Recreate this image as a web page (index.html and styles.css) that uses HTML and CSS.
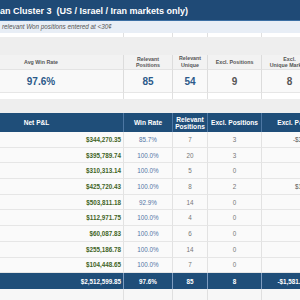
FILE: index.html
```html
<!DOCTYPE html>
<html>
<head>
<meta charset="utf-8">
<link rel="stylesheet" href="styles.css">
</head>
<body>
<div class="title">an Cluster 3&nbsp; (US / Israel / Iran markets only)</div>
<div class="subtitle">relevant Won positions entered at &lt;30¢</div>
<div class="cols stub"><div></div><div></div><div></div><div></div><div></div></div>

<div class="cols stats">
  <div class="lab">Avg Win Rate</div>
  <div class="lab">Relevant<br>Positions</div>
  <div class="lab tall">Relevant<br>Unique<br>Markets</div>
  <div class="lab">Excl. Positions</div>
  <div class="lab">Excl.<br>Unique Markets</div>
  <div class="val blue">97.6%</div>
  <div class="val blue">85</div>
  <div class="val blue">54</div>
  <div class="val grey">9</div>
  <div class="val grey">8</div>
  <div class="gapcell"></div><div class="gapcell"></div><div class="gapcell"></div><div class="gapcell"></div><div class="gapcell"></div>
</div>

<div class="cols2 table">
  <div class="th">Net P&amp;L</div>
  <div class="th">Win Rate</div>
  <div class="th">Relevant<br>Positions</div>
  <div class="th">Excl. Positions</div>
  <div class="th">Excl. P&amp;L</div>

  <div class="td pnl">$344,270.35</div><div class="td wr">85.7%</div><div class="td n">7</div><div class="td n">3</div><div class="td ex">-$3,541.20</div>
  <div class="td pnl">$395,789.74</div><div class="td wr">100.0%</div><div class="td n">20</div><div class="td n">3</div><div class="td ex"></div>
  <div class="td pnl">$310,313.14</div><div class="td wr">100.0%</div><div class="td n">5</div><div class="td n">0</div><div class="td ex"></div>
  <div class="td pnl">$425,720.43</div><div class="td wr">100.0%</div><div class="td n">8</div><div class="td n">2</div><div class="td ex">$1,960.00</div>
  <div class="td pnl">$503,811.18</div><div class="td wr">92.9%</div><div class="td n">14</div><div class="td n">0</div><div class="td ex"></div>
  <div class="td pnl">$112,971.75</div><div class="td wr">100.0%</div><div class="td n">4</div><div class="td n">0</div><div class="td ex"></div>
  <div class="td pnl">$60,087.83</div><div class="td wr">100.0%</div><div class="td n">6</div><div class="td n">0</div><div class="td ex"></div>
  <div class="td pnl">$255,186.78</div><div class="td wr">100.0%</div><div class="td n">14</div><div class="td n">0</div><div class="td ex"></div>
  <div class="td pnl">$104,448.65</div><div class="td wr">100.0%</div><div class="td n">7</div><div class="td n">0</div><div class="td ex"></div>

  <div class="tt pnl">$2,512,599.85</div><div class="tt">97.6%</div><div class="tt">85</div><div class="tt">8</div><div class="tt ex">-$1,581.20</div>
  <div class="after"></div><div class="after"></div><div class="after"></div><div class="after"></div><div class="after"></div>
</div>
</body>
</html>
```
FILE: styles.css
```css
* { box-sizing: border-box; margin: 0; padding: 0; }
html, body { width: 300px; height: 300px; overflow: hidden; }
body {
  background: #eeeeee;
  font-family: "Liberation Sans", Arial, sans-serif;
  color: #333;
}
.title {
  height: 21px;
  background: #1f4a76;
  border-bottom: 1px solid #3b6fa5;
  color: #fff;
  font-weight: bold;
  font-size: 9px;
  line-height: 21px;
  padding-top: 1px;
  white-space: nowrap;
}
.subtitle {
  height: 12px;
  background: #e8eef6;
  font-style: italic;
  font-size: 6.3px;
  line-height: 12px;
  color: #555;
  padding-left: 2px;
  white-space: nowrap;
}
.cols {
  display: grid;
  grid-template-columns: 165px 49px 35px 54px 56px;
  margin-left: -41px;
  width: 359px;
}
.cols2 {
  display: grid;
  grid-template-columns: 174px 49px 35px 54px 62px;
  margin-left: -50px;
  width: 374px;
}
.stub { height: 4px; background: #fff; }
.stub div { border-right: 1px solid #e0e0e0; }

.stats { margin-top: 18px; }
.lab {
  height: 15px;
  background: #f2f2f2;
  border-right: 1px solid #dcdcdc;
  border-bottom: 1px solid #e3e3e3;
  display: flex;
  align-items: center;
  justify-content: center;
  text-align: center;
  overflow: hidden;
  font-size: 5.3px;
  line-height: 6.5px;
  font-weight: bold;
  color: #555;
}
.lab.tall { align-items: flex-start; padding-top: 0; }
.val {
  height: 23px;
  background: #f9f9f9;
  border-right: 1px solid #dcdcdc;
  border-bottom: 1px solid #e6e6e6;
  display: flex;
  align-items: center;
  justify-content: center;
  font-size: 10px;
  font-weight: bold;
}
.blue { color: #2c5a8a; }
.grey { color: #555; }
.gapcell { height: 6px; background: #fff; border-right: 1px solid #e0e0e0; }

.table { margin-top: 14px; }
.th {
  height: 19px;
  background: #1f4e79;
  color: #fff;
  font-weight: bold;
  font-size: 6.6px;
  line-height: 7px;
  border-right: 1px solid #4d77a3;
  display: flex;
  align-items: center;
  justify-content: center;
  text-align: center;
}
.td {
  height: 15.7px;
  background: #fafafa;
  border-right: 1px solid #e2e2e2;
  border-bottom: 1px solid #e6e6e6;
  display: flex;
  align-items: center;
  justify-content: center;
  font-size: 6.3px;
  color: #777;
  white-space: nowrap;
}
.td.pnl { justify-content: flex-end; padding-right: 2px; color: #3f6426; font-weight: bold; }
.td.wr { color: #5275a6; }
.ex { justify-content: flex-end; padding-right: 0; }
.td.ex { color: #555; }
.tt {
  height: 16px;
  background: #1f4e79;
  color: #fff;
  font-weight: bold;
  font-size: 6.3px;
  border-right: 1px solid #7d9cc0;
  display: flex;
  align-items: center;
  justify-content: center;
  white-space: nowrap;
}
.tt.pnl { justify-content: flex-end; padding-right: 2px; }
.after { height: 12px; background: #f7f7f7; border-right: 1px solid #e0e0e0; }
```
